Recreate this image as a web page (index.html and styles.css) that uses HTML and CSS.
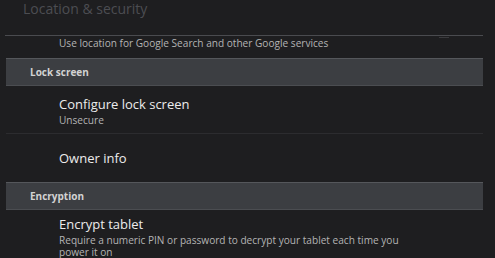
FILE: index.html
```html
<!DOCTYPE html>
<html lang="en">
<head>
    <meta charset="UTF-8">
    <title>Location &amp; security</title>
    <link rel="stylesheet" href="styles.css">
</head>
<body>
    <div class="screen">
        <div class="page-title">Location &amp; security</div>

        <div class="pref pref-cut">
            <div class="pref-summary">Use location for Google Search and other Google services</div>
            <span class="check-edge"></span>
        </div>

        <div class="category">Lock screen</div>

        <div class="pref">
            <div class="pref-title">Configure lock screen</div>
            <div class="pref-summary">Unsecure</div>
        </div>
        <div class="pref pref-single">
            <div class="pref-title">Owner info</div>
        </div>

        <div class="category">Encryption</div>

        <div class="pref pref-last">
            <div class="pref-title">Encrypt tablet</div>
            <div class="pref-summary">Require a numeric PIN or password to decrypt your tablet each time you power it on</div>
        </div>
    </div>
</body>
</html>
```

FILE: styles.css
```css
body {
    margin: 0;
    padding: 0;
    background: #1e1e20;
    font-family: 'Open Sans', 'DejaVu Sans', sans-serif;
    color: #e8e8e8;
    overflow: hidden;
}

.screen {
    width: 495px;
    height: 258px;
    padding: 0 12px 0 6px;
    box-sizing: border-box;
    overflow: hidden;
}

.page-title {
    height: 36px;
    padding-left: 18px;
    font-size: 14px;
    line-height: 18px;
    color: #4c4d52;
    border-bottom: 1px solid #4a4b4f;
    box-sizing: border-box;
    margin-left: -1px;
}

.pref {
    position: relative;
    height: 48px;
    padding-left: 53px;
    box-sizing: border-box;
    border-bottom: 1px solid #2c2c2f;
    display: flex;
    flex-direction: column;
    justify-content: center;
}

.pref-cut {
    height: 22px;
    justify-content: flex-start;
    border-bottom: none;
    padding-top: 1px;
}

.pref-single {
    border-bottom: none;
}

.pref-last {
    border-bottom: none;
    justify-content: flex-start;
    padding-top: 4px;
}

.pref-title {
    font-size: 13px;
    line-height: 20px;
    color: #ececec;
}

.pref-summary {
    font-size: 10.1px;
    line-height: 12px;
    color: #b4b4b4;
    max-width: 350px;
}

.check-edge {
    position: absolute;
    right: 34px;
    top: 1px;
    width: 10px;
    height: 1px;
    background: #3a3a3d;
}

.category {
    height: 28px;
    padding-left: 24px;
    background: #3c3e42;
    border-top: 1px solid #55575b;
    border-bottom: 1px solid #4b4d51;
    box-sizing: border-box;
    font-size: 10px;
    font-weight: bold;
    line-height: 26px;
    color: #d2d2d2;
}
```
